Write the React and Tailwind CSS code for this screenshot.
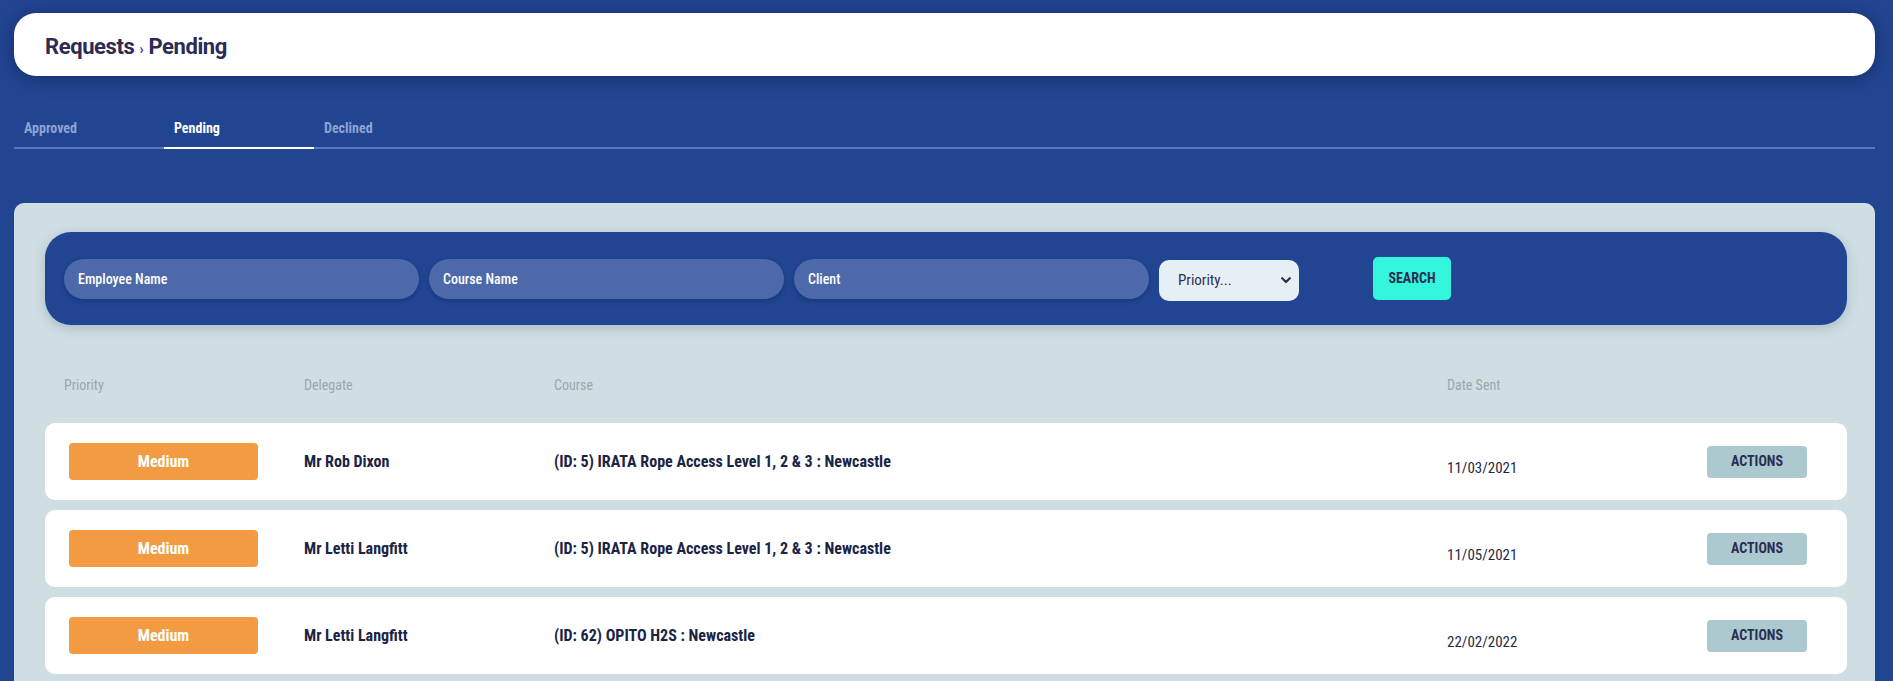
import React from "react";

const condensed = { fontFamily: '"Roboto Condensed", "Liberation Sans Narrow", "Arial Narrow", sans-serif' };

const requests = [
  { id: 1, priority: "Medium", delegate: "Mr Rob Dixon", course: "(ID: 5) IRATA Rope Access Level 1, 2 & 3 : Newcastle", date: "11/03/2021" },
  { id: 2, priority: "Medium", delegate: "Mr Letti Langfitt", course: "(ID: 5) IRATA Rope Access Level 1, 2 & 3 : Newcastle", date: "11/05/2021" },
  { id: 3, priority: "Medium", delegate: "Mr Letti Langfitt", course: "(ID: 62) OPITO H2S : Newcastle", date: "22/02/2022" },
];

const tabs = ["Approved", "Pending", "Declined"];

const App = () => {
  return (
    <div className="min-h-screen w-full bg-[#224592] pl-[14px] pr-[18px] pt-[13px]" style={condensed}>
      {/* header */}
      <div className="flex h-[63px] items-center rounded-[22px] bg-white px-[31px] pt-[4px] shadow-[0_2px_18px_rgba(10,25,70,0.55)]">
        <h1 className="text-[22px] font-bold tracking-[-0.4px] text-[#2c2b54]" style={{ fontFamily: 'Roboto, "Liberation Sans", sans-serif' }}>
          Requests <span className="text-[14px] text-[#3b3f86]">›</span> Pending
        </h1>
      </div>

      {/* tabs */}
      <div className="mt-[42px] flex border-b-[2px] border-[#5a78bd]">
        {tabs.map((tab) => (
          <div
            key={tab}
            className={
              tab === "Pending"
                ? "-mb-[2px] w-[150px] border-b-[2px] border-white pb-[8px] pl-[10px] text-[14px] font-bold text-white"
                : "w-[150px] pb-[8px] pl-[10px] text-[14px] font-bold text-[#8fa3d2]"
            }
          >
            {tab}
          </div>
        ))}
      </div>

      {/* main panel */}
      <div className="mt-[54px] rounded-t-[10px] bg-[#cfdee3] pl-[31px] pr-[28px] pt-[29px] pb-[20px]">
        <div className="flex h-[93px] items-center rounded-[26px] bg-[#214592] pl-[19px] shadow-[0_3px_12px_rgba(60,80,110,0.25)]">
          <div className="flex items-center gap-[10px]">
            {["Employee Name", "Course Name", "Client"].map((p) => (
              <input
                key={p}
                placeholder={p}
                className="h-[40px] w-[355px] rounded-[20px] bg-[#4d69aa] px-[14px] text-[14px] font-medium text-white shadow-[0_2px_4px_rgba(10,30,80,0.35)] outline-none placeholder:text-white"
              />
            ))}
            <div className="relative">
              <select className="mt-[3px] h-[41px] w-[140px] appearance-none rounded-[10px] bg-[#e6eff3] pl-[19px] text-[15px] text-[#2d2f5a] outline-none">
                <option>Priority...</option>
                <option>High</option>
                <option>Medium</option>
                <option>Low</option>
              </select>
              <svg className="pointer-events-none absolute right-[8px] top-[20px]" width="10" height="7" viewBox="0 0 10 7">
                <path d="M1.2 1.2 5 5 8.8 1.2" fill="none" stroke="#2d2f5a" strokeWidth="2.2" strokeLinecap="round" strokeLinejoin="round" />
              </svg>
            </div>
          </div>
          <button className="ml-[74px] h-[43px] w-[78px] rounded-[5px] bg-[#33f6dc] text-[14px] font-bold text-[#2b2e50]">
            SEARCH
          </button>
        </div>

        {/* table header */}
        <div className="mt-[50px] grid grid-cols-[259px_250px_893px_260px_1fr] text-[14px] text-[#9ba6b1]">
          <div className="pl-[19px]">Priority</div>
          <div>Delegate</div>
          <div>Course</div>
          <div>Date Sent</div>
          <div></div>
        </div>

        {/* rows */}
        <div className="mt-[27px] flex flex-col gap-[10px]">
          {requests.map((r) => (
            <div key={r.id} className="grid h-[77px] grid-cols-[259px_250px_893px_260px_1fr] items-center rounded-[10px] bg-white">
              <div className="pl-[24px]">
                <div className="flex h-[37px] w-[189px] items-center justify-center rounded-[4px] bg-[#f39b42] text-[16px] font-bold text-white">
                  {r.priority}
                </div>
              </div>
              <div className="text-[16px] font-bold text-[#1b2444]">{r.delegate}</div>
              <div className="text-[16px] font-bold text-[#1b2444]">{r.course}</div>
              <div className="pt-[14px] text-[15px] text-[#1f2a44]">{r.date}</div>
              <div>
                <button className="h-[32px] w-[100px] rounded-[4px] bg-[#adc9d0] text-[14px] font-bold text-[#2b2e50]">
                  ACTIONS
                </button>
              </div>
            </div>
          ))}
        </div>
      </div>
    </div>
  );
};

export default App;
